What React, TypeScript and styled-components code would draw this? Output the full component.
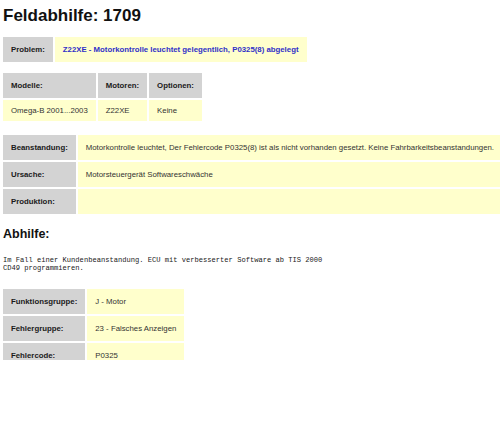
import styled, { createGlobalStyle } from "styled-components";

const GlobalStyle = createGlobalStyle`
  html, body {
    margin: 0;
    padding: 0;
    background: #fff;
  }
  body {
    font-family: "Liberation Sans", Arial, sans-serif;
    color: #222;
  }
`;

const Page = styled.div`
  height: 360px;
  overflow: hidden;
  padding-left: 3px;
`;

const Title = styled.h1`
  margin: 6px 0 0;
  font-size: 17px;
  line-height: 20px;
  font-weight: bold;
  color: #111;
`;

const SubTitle = styled.h2`
  margin: 11px 0 0;
  font-size: 12.5px;
  line-height: 15px;
  font-weight: bold;
  color: #111;
`;

const Table = styled.table<{ gap: number }>`
  border-collapse: separate;
  border-spacing: 2px;
  margin: ${(props) => props.gap}px 0 0 -2px;
  font-size: 7.8px;
`;

const Label = styled.th<{ h?: number }>`
  height: ${(props) => props.h || 25}px;
  padding: 0 8px;
  background: #d3d3d3;
  color: #1a1a1a;
  font-weight: bold;
  text-align: left;
  white-space: nowrap;
  vertical-align: middle;
`;

const Value = styled.td<{ h?: number; strong?: boolean }>`
  height: ${(props) => props.h || 25}px;
  padding: 0 8px;
  background: #ffffcc;
  color: ${(props) => (props.strong ? "#3030c8" : "#333")};
  font-weight: ${(props) => (props.strong ? "bold" : "normal")};
  white-space: nowrap;
  vertical-align: middle;
`;

const Mono = styled.pre`
  margin: 14px 0 0;
  font-family: "Liberation Mono", "Courier New", monospace;
  font-size: 7.1px;
  line-height: 8px;
  color: #222;
`;

export default function App() {
  return (
    <Page>
      <GlobalStyle />
      <Title>Feldabhilfe: 1709</Title>

      <Table gap={9}>
        <tbody>
          <tr>
            <Label>Problem:</Label>
            <Value strong>
              Z22XE - Motorkontrolle leuchtet gelegentlich, P0325(8) abgelegt
            </Value>
          </tr>
        </tbody>
      </Table>

      <Table gap={7}>
        <tbody>
          <tr>
            <Label>Modelle:</Label>
            <Label>Motoren:</Label>
            <Label>Optionen:</Label>
          </tr>
          <tr>
            <Value h={21}>Omega-B 2001...2003</Value>
            <Value h={21}>Z22XE</Value>
            <Value h={21}>Keine</Value>
          </tr>
        </tbody>
      </Table>

      <Table gap={10}>
        <tbody>
          <tr>
            <Label>Beanstandung:</Label>
            <Value>
              Motorkontrolle leuchtet, Der Fehlercode P0325(8) ist als nicht
              vorhanden gesetzt. Keine Fahrbarkeitsbeanstandungen.
            </Value>
          </tr>
          <tr>
            <Label>Ursache:</Label>
            <Value>Motorsteuergerät Softwareschwäche</Value>
          </tr>
          <tr>
            <Label>Produktion:</Label>
            <Value />
          </tr>
        </tbody>
      </Table>

      <SubTitle>Abhilfe:</SubTitle>
      <Mono>
        {"Im Fall einer Kundenbeanstandung. ECU mit verbesserter Software ab TIS 2000\nCD49 programmieren."}
      </Mono>

      <Table gap={15}>
        <tbody>
          <tr>
            <Label>Funktionsgruppe:</Label>
            <Value>J - Motor</Value>
          </tr>
          <tr>
            <Label>Fehlergruppe:</Label>
            <Value>23 - Falsches Anzeigen</Value>
          </tr>
          <tr>
            <Label>Fehlercode:</Label>
            <Value>P0325</Value>
          </tr>
        </tbody>
      </Table>
    </Page>
  );
}
